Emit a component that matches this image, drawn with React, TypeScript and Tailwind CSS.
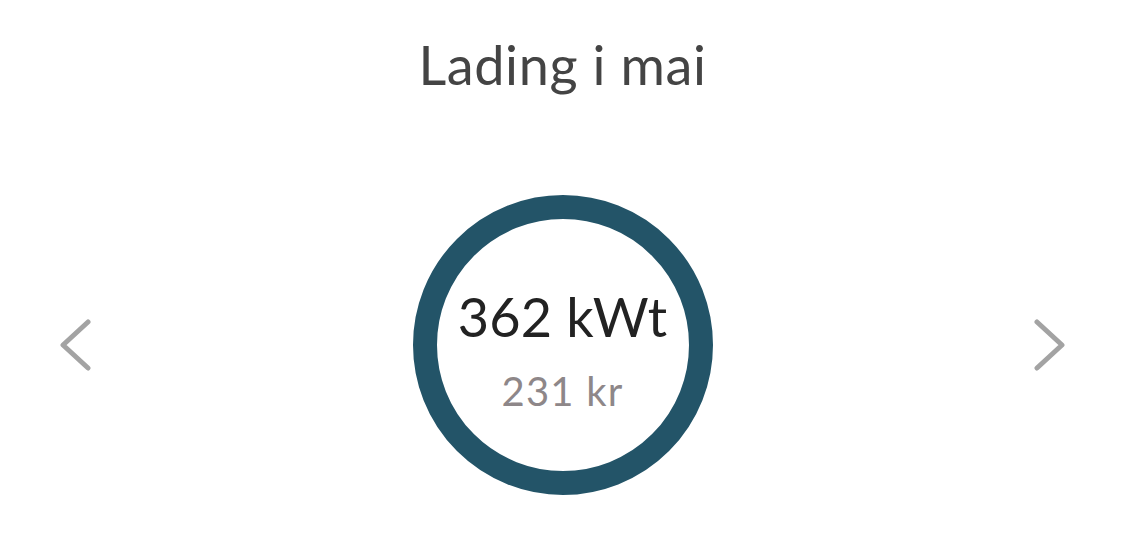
export default function App() {
  return (
    <div
      className="w-[1125px] h-[545px] bg-white flex flex-col items-center"
      style={{ fontFamily: "Lato, 'Open Sans', sans-serif" }}
    >
      <h1 className="mt-[30px] text-[54px] leading-[70px] text-[#444444] font-normal tracking-[0.6px]">
        Lading i mai
      </h1>

      <div className="mt-[95px] w-full flex items-center justify-between pl-[59px] pr-[59px]">
        <button className="w-[32px] h-[52px] flex items-center justify-center">
          <svg width="32" height="52" viewBox="0 0 32 52" fill="none">
            <path d="M29 3 L4 26 L29 49" stroke="#a3a3a3" strokeWidth="5" strokeLinecap="round" strokeLinejoin="round" />
          </svg>
        </button>

        {/* Ring */}
        <div className="w-[300px] h-[300px] rounded-full border-[24px] border-[#235468] flex flex-col items-center justify-center">
          <p className="text-[54px] leading-[60px] text-[#222222] font-normal mt-[10px] tracking-[0.2px]">362 kWt</p>
          <p className="text-[40px] leading-[44px] text-[#8e8789] font-normal mt-[22px] tracking-[1.2px]">231 kr</p>
        </div>

        <button className="w-[32px] h-[52px] flex items-center justify-center">
          <svg width="32" height="52" viewBox="0 0 32 52" fill="none">
            <path d="M3 3 L28 26 L3 49" stroke="#a3a3a3" strokeWidth="5" strokeLinecap="round" strokeLinejoin="round" />
          </svg>
        </button>
      </div>
    </div>
  );
}
